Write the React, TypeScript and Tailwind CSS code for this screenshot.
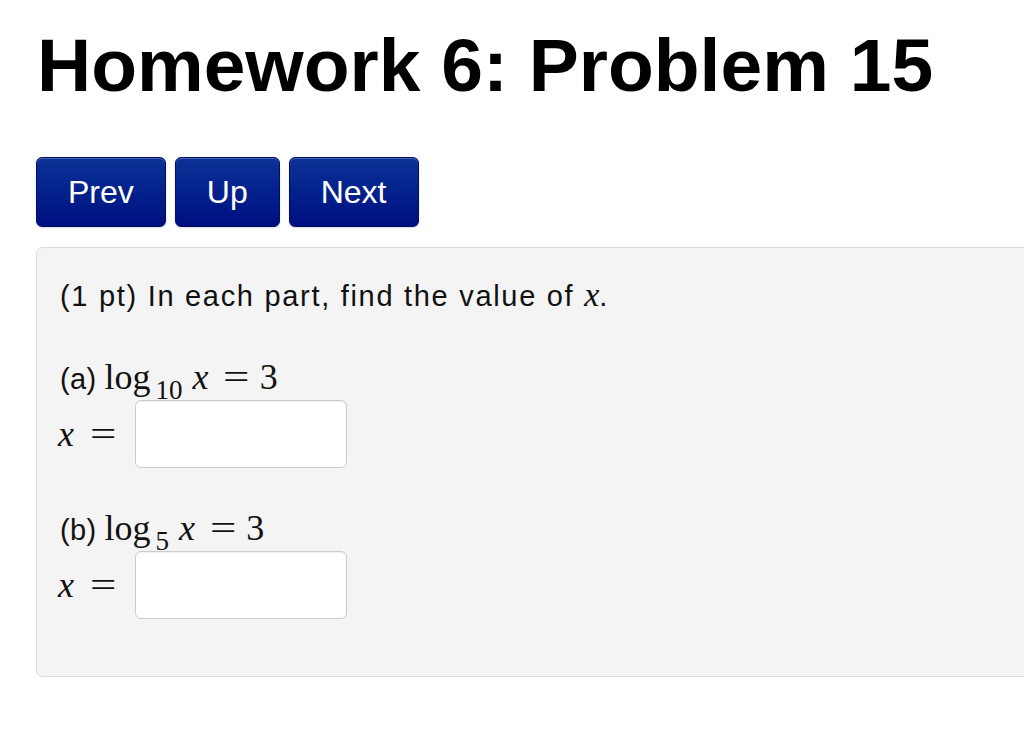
const sans = "font-['Liberation_Sans',Helvetica,Arial,sans-serif]";
const serif = "font-['Liberation_Serif','Times_New_Roman',serif]";

const NavButton = ({ label }: { label: string }) => (
  <button
    type="button"
    className={`flex h-[70px] items-center rounded-md border border-[#001060] bg-gradient-to-b from-[#0d3197] to-[#000c80] px-[31px] text-[32px] text-white shadow-[inset_0_1px_0_rgba(255,255,255,0.25),0_1px_2px_rgba(0,0,0,0.15)] ${sans}`}
  >
    {label}
  </button>
);

// the equals sign of the math font is wider than the Times one
const Eq = ({ className = "" }: { className?: string }) => (
  <span className={`inline-block scale-x-[1.3] ${className}`}>=</span>
);

const AnswerRow = () => (
  <div className="mt-[2px] flex items-center">
    <span className={`-ml-[2px] text-[36px] leading-none ${serif}`}>
      <i>x</i>
      <Eq className="ml-[19px]" />
    </span>
    <input
      type="text"
      className="ml-[22px] h-[68px] w-[212px] rounded-md border border-[#cccccc] bg-white shadow-[inset_0_1px_1px_rgba(0,0,0,0.06)] outline-none"
    />
  </div>
);

const Equation = ({ part, base }: { part: string; base: string }) => (
  <div className="h-[44px] whitespace-nowrap text-[36px] leading-[44px]">
    <span className={`text-[29px] tracking-[0.3px] ${sans}`}>({part})</span>
    <span className={`ml-[8px] ${serif}`}>
      log
      <span className="ml-[5px] align-[-10px] text-[27px]">{base}</span>
      <i className="ml-[10px]">x</i>
      <Eq className="ml-[18px]" />
      <span className="ml-[13px]">3</span>
    </span>
  </div>
);

export default function App() {
  return (
    <div className="h-[732px] w-[1024px] overflow-hidden bg-white text-[#111]">
      <h1
        className={`ml-[37px] pt-[28px] text-[75px] font-bold leading-[75px] text-black ${sans}`}
      >
        Homework 6: Problem 15
      </h1>

      <div className="ml-[36px] mt-[54px] flex gap-[9px]">
        <NavButton label="Prev" />
        <NavButton label="Up" />
        <NavButton label="Next" />
      </div>

      <div className="ml-[36px] mt-[20px] h-[430px] w-[1010px] rounded-md border border-[#dddddd] bg-[#f4f4f4] pl-[23px] pt-[29px]">
        <p className={`text-[29px] leading-[36px] tracking-[1.7px] ${sans}`}>
          (1 pt) In each part, find the value of{" "}
          <i className={`text-[34px] tracking-normal ${serif}`}>x</i>.
        </p>

        <div className="mt-[40px]">
          <Equation part="a" base="10" />
          <AnswerRow />
        </div>

        <div className="mt-[37px]">
          <Equation part="b" base="5" />
          <AnswerRow />
        </div>
      </div>
    </div>
  );
}
